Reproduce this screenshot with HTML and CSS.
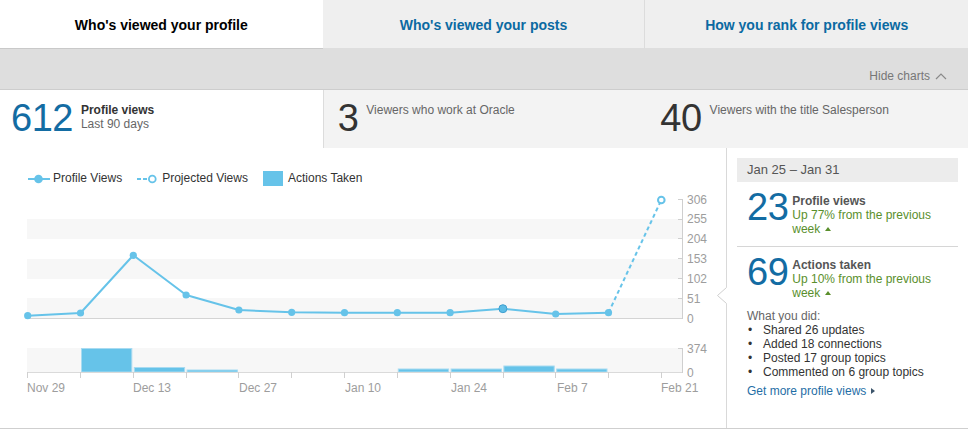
FILE: index.html
```html
<!DOCTYPE html>
<html lang="en">
<head>
<meta charset="utf-8">
<title>Who's viewed your profile</title>
<link rel="stylesheet" href="styles.css">
</head>
<body>
<div class="page">
  <nav class="tabs">
    <div class="tab active">Who's viewed your profile</div>
    <div class="tab link">Who's viewed your posts</div>
    <div class="tab link last">How you rank for profile views</div>
  </nav>

  <div class="band">
    <span class="hide">Hide charts
      <svg class="chev" width="12" height="8" viewBox="0 0 12 8"><polyline points="1,7 6,2 11,7" fill="none" stroke="#8a8a8a" stroke-width="1.2"/></svg>
    </span>
  </div>

  <div class="stats">
    <div class="stat first">
      <span class="big blue">612</span>
      <div class="stat-text"><b>Profile views</b><span class="sub">Last 90 days</span></div>
    </div>
    <div class="stat shaded second">
      <span class="big">3</span>
      <div class="stat-text muted">Viewers who work at Oracle</div>
    </div>
    <div class="stat shaded third">
      <span class="big">40</span>
      <div class="stat-text muted">Viewers with the title Salesperson</div>
    </div>
  </div>

  <div class="main">
    <div class="chart-col">
      <div class="legend">
        <div class="leg-item">
          <svg class="leg-icon" width="22" height="10" viewBox="0 0 22 10"><line x1="0" y1="5" x2="22" y2="5" stroke="#66c3e9" stroke-width="2"/><circle cx="10.5" cy="5" r="4.3" fill="#66c3e9"/></svg>
          <span>Profile Views</span>
        </div>
        <div class="leg-item proj">
          <svg class="leg-icon" width="20" height="10" viewBox="0 0 20 10"><line x1="0" y1="5" x2="11" y2="5" stroke="#66c3e9" stroke-width="2" stroke-dasharray="4 2"/><circle cx="15.3" cy="5" r="3.4" fill="#fff" stroke="#66c3e9" stroke-width="1.8"/></svg>
          <span>Projected Views</span>
        </div>
        <div class="leg-item">
          <span class="leg-square"></span>
          <span>Actions Taken</span>
        </div>
      </div>

      <svg class="chart" width="726" height="210" viewBox="0 0 726 210">
        <g fill="#f7f7f7">
          <rect x="27" y="29" width="655" height="20"/>
          <rect x="27" y="69" width="655" height="20"/>
          <rect x="27" y="108" width="655" height="20"/>
        </g>
        <line x1="27" y1="128.5" x2="682" y2="128.5" stroke="#d4d4d4"/>
        <line x1="682.5" y1="9" x2="682.5" y2="129" stroke="#cfcfcf"/>
        <g stroke="#cfcfcf">
          <line x1="678" y1="9.5" x2="683" y2="9.5"/>
          <line x1="678" y1="29.5" x2="683" y2="29.5"/>
          <line x1="678" y1="48.5" x2="683" y2="48.5"/>
          <line x1="678" y1="68.5" x2="683" y2="68.5"/>
          <line x1="678" y1="88.5" x2="683" y2="88.5"/>
          <line x1="678" y1="108.5" x2="683" y2="108.5"/>
        </g>
        <g class="axis-label">
          <text x="687" y="13.5">306</text>
          <text x="687" y="33.3">255</text>
          <text x="687" y="53">204</text>
          <text x="687" y="72.8">153</text>
          <text x="687" y="92.6">102</text>
          <text x="687" y="112.5">51</text>
          <text x="687" y="132.5">0</text>
        </g>

        <polyline points="27.7,125.7 80.5,123 133.3,65.3 186.1,105 238.9,120 291.7,122.3 344.5,122.7 397.3,122.7 450.1,122.7 502.9,118.7 555.7,124 608.5,122.7" fill="none" stroke="#66c3e9" stroke-width="2" stroke-linejoin="round"/>
        <line x1="608.5" y1="122.7" x2="661.3" y2="10" stroke="#66c3e9" stroke-width="2" stroke-dasharray="4 3"/>
        <g fill="#66c3e9">
          <circle cx="27.7" cy="125.7" r="3.6"/>
          <circle cx="80.5" cy="123" r="3.6"/>
          <circle cx="133.3" cy="65.3" r="3.6"/>
          <circle cx="186.1" cy="105" r="3.6"/>
          <circle cx="238.9" cy="120" r="3.6"/>
          <circle cx="291.7" cy="122.3" r="3.6"/>
          <circle cx="344.5" cy="122.7" r="3.6"/>
          <circle cx="397.3" cy="122.7" r="3.6"/>
          <circle cx="450.1" cy="122.7" r="3.6"/>
          <circle cx="555.7" cy="124" r="3.6"/>
          <circle cx="608.5" cy="122.7" r="3.6"/>
        </g>
        <circle cx="502.9" cy="118.7" r="4" fill="#5dbde6" stroke="#3f9fcf" stroke-width="1"/>
        <circle cx="661.3" cy="10" r="3.3" fill="#fff" stroke="#66c3e9" stroke-width="2"/>

        <rect x="27" y="158" width="655" height="24" fill="#f7f7f7"/>
        <g fill="#66c3e9" stroke="#a8dbf1" stroke-width="1">
          <rect x="81.5" y="158.5" width="50.3" height="23.5"/>
          <rect x="134.3" y="177.5" width="50.3" height="4.5"/>
          <rect x="187.1" y="180" width="50.3" height="2"/>
          <rect x="398.3" y="179" width="50.3" height="3"/>
          <rect x="451.1" y="179" width="50.3" height="3"/>
          <rect x="503.9" y="176" width="50.3" height="6"/>
          <rect x="556.7" y="179" width="50.3" height="3"/>
        </g>
        <line x1="27" y1="182.5" x2="682" y2="182.5" stroke="#dadada"/>
        <line x1="682.5" y1="158" x2="682.5" y2="183" stroke="#cfcfcf"/>
        <line x1="678" y1="158.5" x2="683" y2="158.5" stroke="#cfcfcf"/>
        <g stroke="#d0d0d0">
          <line x1="27.5" y1="182" x2="27.5" y2="188"/>
          <line x1="80.5" y1="182" x2="80.5" y2="188"/>
          <line x1="133.5" y1="182" x2="133.5" y2="188"/>
          <line x1="186.5" y1="182" x2="186.5" y2="188"/>
          <line x1="238.5" y1="182" x2="238.5" y2="188"/>
          <line x1="291.5" y1="182" x2="291.5" y2="188"/>
          <line x1="344.5" y1="182" x2="344.5" y2="188"/>
          <line x1="397.5" y1="182" x2="397.5" y2="188"/>
          <line x1="450.5" y1="182" x2="450.5" y2="188"/>
          <line x1="503.5" y1="182" x2="503.5" y2="188"/>
          <line x1="555.5" y1="182" x2="555.5" y2="188"/>
          <line x1="608.5" y1="182" x2="608.5" y2="188"/>
          <line x1="661.5" y1="182" x2="661.5" y2="188"/>
        </g>
        <g class="axis-label">
          <text x="687" y="162.7">374</text>
          <text x="687" y="186.5">0</text>
          <text x="27" y="202">Nov 29</text>
          <text x="133" y="202">Dec 13</text>
          <text x="239" y="202">Dec 27</text>
          <text x="345" y="202">Jan 10</text>
          <text x="451" y="202">Jan 24</text>
          <text x="557" y="202">Feb 7</text>
          <text x="661" y="202">Feb 21</text>
        </g>
      </svg>
    </div>

    <aside class="side">
      <svg class="pointer" width="11" height="17" viewBox="0 0 11 17"><polygon points="11,0 1.5,8.5 11,17" fill="#fff"/><polyline points="10.5,0.5 1.5,8.5 10.5,16.5" fill="none" stroke="#cfcfcf"/></svg>
      <div class="side-head">Jan 25 – Jan 31</div>
      <div class="metric first-metric">
        <span class="big blue">23</span>
        <div class="metric-text">
          <b>Profile views</b>
          <span class="up">Up 77% from the previous week<i class="tri"></i></span>
        </div>
      </div>
      <div class="metric second-metric">
        <span class="big blue">69</span>
        <div class="metric-text">
          <b>Actions taken</b>
          <span class="up">Up 10% from the previous week<i class="tri"></i></span>
        </div>
      </div>
      <div class="did">
        <div class="did-title">What you did:</div>
        <ul class="did-list">
          <li><span class="dot">•</span>Shared 26 updates</li>
          <li><span class="dot">•</span>Added 18 connections</li>
          <li><span class="dot">•</span>Posted 17 group topics</li>
          <li><span class="dot">•</span>Commented on 6 group topics</li>
        </ul>
        <a class="more" href="#">Get more profile views<i class="rtri"></i></a>
      </div>
    </aside>
  </div>
</div>
</body>
</html>
```

FILE: styles.css
```css
* { box-sizing: border-box; }

html, body {
  margin: 0;
  padding: 0;
  background: #fff;
}

body {
  font-family: "Liberation Sans", Arial, sans-serif;
  font-size: 12px;
  color: #333;
}

.page {
  width: 968px;
  height: 429px;
  overflow: hidden;
}

/* Tabs */
.tabs {
  display: grid;
  grid-template-columns: 1fr 1fr 1fr;
  height: 49px;
}

.tab {
  display: flex;
  align-items: center;
  justify-content: center;
  font-size: 14px;
  font-weight: bold;
  background: #efefef;
  border-bottom: 1px solid #dedede;
  padding-top: 1px;
}

.tab.active {
  background: #fff;
  color: #000;
  border-bottom: 1px solid #c9c9c9;
}

.tab.link {
  color: #0b6aa2;
}

.tab.link:not(.last) {
  border-right: 1px solid #dcdcdc;
}

/* Band */
.band {
  height: 41px;
  background: #dedede;
  border-bottom: 1px solid #cdcdcd;
  display: flex;
  justify-content: flex-end;
  align-items: flex-end;
  padding: 0 21px 6px 0;
}

.hide {
  display: flex;
  align-items: center;
  color: #777;
  font-size: 12px;
  line-height: 14px;
}

.chev {
  margin-left: 5px;
  margin-top: -1px;
}

/* Stats */
.stats {
  display: grid;
  grid-template-columns: 1fr 1fr 1fr;
  height: 58px;
}

.stat {
  display: flex;
  align-items: flex-start;
  padding-top: 13px;
}

.stat.first {
  padding-left: 11px;
  background: #fff;
}

.stat.shaded {
  background: #f3f3f3;
}

.stat.second {
  border-left: 1px solid #dcdcdc;
  padding-left: 14px;
}

.stat.third {
  padding-left: 15px;
}

.big {
  font-size: 38px;
  line-height: 30px;
  color: #333;
  letter-spacing: -0.5px;
}

.big.blue {
  color: #136ca3;
}

.stat-text {
  margin-left: 8px;
  display: flex;
  flex-direction: column;
  line-height: 14px;
  font-size: 12px;
  color: #333;
}

.stat-text .sub {
  color: #666;
}

.stat-text.muted {
  color: #666;
}

/* Main */
.main {
  display: flex;
  height: 281px;
  border-bottom: 1px solid #cfcfcf;
}

.chart-col {
  width: 726px;
  flex: none;
  padding-top: 22px;
}

.legend {
  display: flex;
  align-items: center;
  height: 17px;
  padding-left: 28px;
  font-size: 12px;
  color: #333;
  line-height: 17px;
}

.leg-item {
  display: flex;
  align-items: center;
  margin-right: 15px;
}

.leg-item .leg-icon {
  margin-right: 3px;
}

.leg-item.proj .leg-icon {
  margin-right: 5px;
}

.leg-square {
  display: inline-block;
  width: 20px;
  height: 15px;
  background: #66c3e9;
  margin-right: 5px;
}

.chart {
  display: block;
  margin-top: 3px;
}

.axis-label text,
.axis-label {
  font-family: "Liberation Sans", Arial, sans-serif;
  font-size: 12px;
  fill: #9d9d9d;
}

/* Sidebar */
.side {
  position: relative;
  flex: 1;
  border-left: 1px solid #d9d9d9;
  padding: 10px 10px 0 10px;
}

.pointer {
  position: absolute;
  left: -11px;
  top: 139px;
}

.side-head {
  height: 24px;
  line-height: 24px;
  background: #ececec;
  color: #555;
  font-size: 13px;
  padding-left: 10px;
}

.metric {
  display: flex;
  align-items: flex-start;
  padding: 10px 0 10px 10px;
}

.first-metric {
  border-bottom: 1px solid #d6d6d6;
}

.second-metric {
  padding-bottom: 9px;
}

.metric .big {
  margin-right: 4px;
}

.metric-text {
  display: flex;
  flex-direction: column;
  padding-top: 1.5px;
  line-height: 14px;
  font-size: 12px;
}

.metric-text b {
  color: #555;
}

.up {
  color: #5a8f2c;
}

.tri {
  display: inline-block;
  width: 0;
  height: 0;
  border-left: 3px solid transparent;
  border-right: 3px solid transparent;
  border-bottom: 4px solid #5a8f2c;
  margin-left: 5px;
  vertical-align: 2px;
}

.did {
  padding-left: 10px;
  font-size: 12px;
  line-height: 14px;
}

.did-title {
  color: #666;
}

.did-list {
  list-style: none;
  margin: 0;
  padding: 0;
  color: #333;
}

.did-list li {
  display: flex;
}

.dot {
  width: 16px;
  padding-left: 1px;
  flex: none;
}

.more {
  display: inline-block;
  margin-top: 5px;
  color: #1f6ea6;
  text-decoration: none;
}

.rtri {
  display: inline-block;
  width: 0;
  height: 0;
  border-top: 3px solid transparent;
  border-bottom: 3px solid transparent;
  border-left: 4px solid #3d556b;
  margin-left: 5px;
  vertical-align: 1px;
}
```
